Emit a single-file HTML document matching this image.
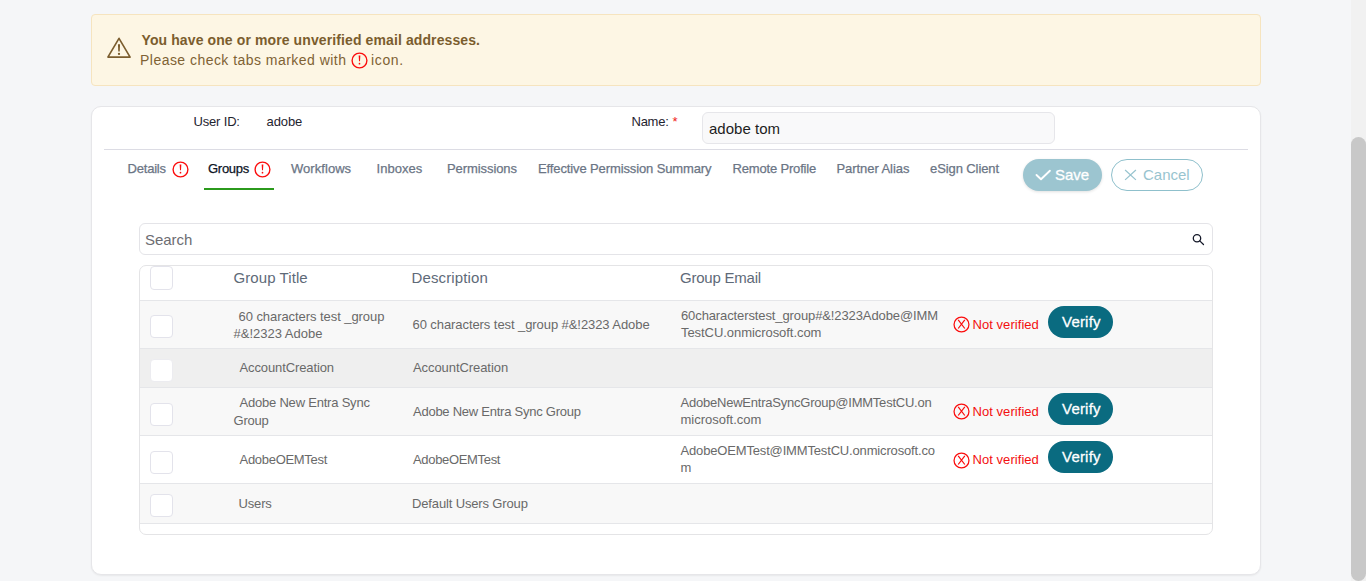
<!DOCTYPE html>
<html><head><meta charset="utf-8"><title>Groups</title><style>
html,body{margin:0;padding:0;}
body{width:1366px;height:581px;overflow:hidden;position:relative;background:#f5f6f8;font-family:"Liberation Sans",sans-serif;}
.t{position:absolute;white-space:pre;line-height:1;}
.ic{position:absolute;display:block;}
.banner{position:absolute;left:91px;top:14px;width:1168px;height:69.5px;background:#fdf6e4;border:1px solid #f6e4bf;border-radius:4px;}
.card{position:absolute;left:91px;top:106px;width:1167.6px;height:467px;background:#fff;border:1px solid #e6e6e9;border-radius:10px;box-shadow:0 1px 2px rgba(0,0,0,0.06);}
.sep{position:absolute;left:104px;top:149px;width:1144px;height:1.2px;background:#dcdce4;}
.inp{position:absolute;left:702px;top:112.3px;width:351px;height:29.4px;background:#f9f9fa;border:1px solid #e6e6ea;border-radius:6px;}
.uline{position:absolute;left:204px;top:187.6px;width:70px;height:2.6px;background:#2b9a1c;}
.save{position:absolute;left:1023px;top:159px;width:79px;height:31.7px;background:#9cc5d0;border-radius:16px;box-shadow:0 1px 3px rgba(0,0,0,0.12);}
.cancel{position:absolute;left:1111px;top:159px;width:90px;height:29.7px;border:1px solid #8fc0cc;border-radius:16px;background:#fff;}
.search{position:absolute;left:139px;top:223px;width:1072px;height:30px;border:1px solid #e4e4e8;border-radius:6px;background:#fff;}
.table{position:absolute;left:139px;top:265px;width:1072px;height:267.5px;border:1px solid #e4e4e6;border-radius:7px;background:#fff;overflow:hidden;}
.row{position:absolute;left:0;right:0;border-top:1px solid #e5e6e9;box-sizing:border-box;}
.cb{position:absolute;left:150px;width:22.5px;height:23px;box-sizing:border-box;border:1px solid #e3e3eb;border-radius:4px;background:#fff;}
.vb{position:absolute;left:1048px;width:65.3px;height:31.5px;background:#0a6b80;border-radius:16px;}
.sbtrack{position:absolute;left:1351px;top:0;width:15px;height:581px;background:#f1f1f1;border-left:0px solid #e8e8e8;}
.sbthumb{position:absolute;left:1351px;top:137px;width:15px;height:444px;background:#c8c8c8;border-radius:7.5px;}
</style></head>
<body>
<div class="banner"></div>
<svg class="ic" style="left:106px;top:36px" width="26" height="24" viewBox="0 0 26 24"><path d="M13 2.3 L24.1 21.1 L1.9 21.1 Z" fill="none" stroke="#7b5d2e" stroke-width="1.65" stroke-linejoin="round"/><path d="M11.95 8.2 L14.05 8.2 L13.75 15.5 L12.25 15.5 Z" fill="#7b5d2e"/><circle cx="13" cy="17.9" r="1.15" fill="#7b5d2e"/></svg>
<svg class="ic" style="left:350.6px;top:51.6px" width="17" height="17" viewBox="0 0 17 17"><circle cx="8.5" cy="8.5" r="7.4" fill="none" stroke="#fb0c0c" stroke-width="1.35"/><path d="M7.65 3.5 L9.35 3.5 L9.0 9.3 L8.0 9.3 Z" fill="#fb0c0c"/><circle cx="8.5" cy="11.7" r="0.85" fill="#fb0c0c"/></svg>
<div class="card"></div>
<div class="sep"></div>
<div class="inp"></div>
<span class="t" style="left:672.5px;top:114.80px;font-size:13px;color:#f01818">*</span>
<svg class="ic" style="left:171.6px;top:160.6px" width="17" height="17" viewBox="0 0 17 17"><circle cx="8.5" cy="8.5" r="7.4" fill="none" stroke="#fb0c0c" stroke-width="1.35"/><path d="M7.65 3.5 L9.35 3.5 L9.0 9.3 L8.0 9.3 Z" fill="#fb0c0c"/><circle cx="8.5" cy="11.7" r="0.85" fill="#fb0c0c"/></svg>
<svg class="ic" style="left:253.6px;top:160.6px" width="17" height="17" viewBox="0 0 17 17"><circle cx="8.5" cy="8.5" r="7.4" fill="none" stroke="#fb0c0c" stroke-width="1.35"/><path d="M7.65 3.5 L9.35 3.5 L9.0 9.3 L8.0 9.3 Z" fill="#fb0c0c"/><circle cx="8.5" cy="11.7" r="0.85" fill="#fb0c0c"/></svg>
<div class="uline"></div>
<div class="save"></div>
<svg class="ic" style="left:1035px;top:169px" width="17" height="13" viewBox="0 0 17 13"><path d="M1.5 6.0 L6.0 10.2 L14.9 1.7" fill="none" stroke="#fff" stroke-width="1.9" stroke-linecap="round" stroke-linejoin="round"/></svg>
<div class="cancel"></div>
<svg class="ic" style="left:1124px;top:169px" width="13" height="12" viewBox="0 0 13 12"><path d="M1.1 1.0 L11.9 10.9 M11.9 1.0 L1.1 10.9" fill="none" stroke="#98c4cf" stroke-width="1.25"/></svg>
<div class="search"></div>
<svg class="ic" style="left:1191px;top:232px" width="15" height="15" viewBox="0 0 15 15"><circle cx="6" cy="6.25" r="3.7" fill="none" stroke="#141828" stroke-width="1.3"/><path d="M8.7 8.9 L12.5 12.5" stroke="#141828" stroke-width="1.3" stroke-linecap="round"/></svg>
<div class="table">
  <div class="row" style="top:34px;height:48px;background:#f8f8f8"></div>
  <div class="row" style="top:82px;height:39px;background:#efefef"></div>
  <div class="row" style="top:121px;height:48px;background:#f8f8f8"></div>
  <div class="row" style="top:169px;height:48px;background:#ffffff"></div>
  <div class="row" style="top:217px;height:41px;background:#f8f8f8;border-bottom:1px solid #e5e6e9"></div>
</div>
<div class="cb" style="top:266px;height:23.6px"></div>
<div class="cb" style="top:315.3px"></div>
<div class="cb" style="top:359px;border-color:#ececf0"></div>
<div class="cb" style="top:403px"></div>
<div class="cb" style="top:450.7px"></div>
<div class="cb" style="top:494px"></div>
<svg class="ic" style="left:952.5px;top:316.4px" width="17" height="17" viewBox="0 0 17 17"><circle cx="8.5" cy="8.5" r="7.45" fill="none" stroke="#fb0c0c" stroke-width="1.25"/><path d="M5.2 3.9 L11.8 12.5 M11.8 3.9 L5.2 12.5" stroke="#fb0c0c" stroke-width="1.2" fill="none"/></svg>
<svg class="ic" style="left:952.5px;top:402.9px" width="17" height="17" viewBox="0 0 17 17"><circle cx="8.5" cy="8.5" r="7.45" fill="none" stroke="#fb0c0c" stroke-width="1.25"/><path d="M5.2 3.9 L11.8 12.5 M11.8 3.9 L5.2 12.5" stroke="#fb0c0c" stroke-width="1.2" fill="none"/></svg>
<svg class="ic" style="left:952.5px;top:451.79999999999995px" width="17" height="17" viewBox="0 0 17 17"><circle cx="8.5" cy="8.5" r="7.45" fill="none" stroke="#fb0c0c" stroke-width="1.25"/><path d="M5.2 3.9 L11.8 12.5 M11.8 3.9 L5.2 12.5" stroke="#fb0c0c" stroke-width="1.2" fill="none"/></svg>
<div class="vb" style="top:306.3px"></div>
<div class="vb" style="top:393.3px"></div>
<div class="vb" style="top:441px"></div>
<div class="sbtrack"></div>
<div class="sbthumb"></div>
<span id="b1" class="t" style="left:141.50px;top:33.15px;font-size:14px;font-weight:bold;color:#7b5d2e;letter-spacing:0.106px">You have one or more unverified email addresses.</span>
<span id="b2" class="t" style="left:140.00px;top:53.15px;font-size:14px;font-weight:normal;color:#7f6234;letter-spacing:0.464px">Please check tabs marked with</span>
<span id="b3" class="t" style="left:371.00px;top:53.15px;font-size:14px;font-weight:normal;color:#7f6234;letter-spacing:0.650px">icon.</span>
<span id="uid" class="t" style="left:193.50px;top:115.00px;font-size:13px;font-weight:normal;color:#1f2430;letter-spacing:-0.172px">User ID:</span>
<span id="uidv" class="t" style="left:266.50px;top:115.00px;font-size:13px;font-weight:normal;color:#1f2430;letter-spacing:-0.100px">adobe</span>
<span id="nm" class="t" style="left:631.50px;top:114.80px;font-size:13px;font-weight:normal;color:#1f2430;letter-spacing:-0.250px">Name:</span>
<span id="nmv" class="t" style="left:709.00px;top:121.00px;font-size:15px;font-weight:normal;color:#1d1d22;letter-spacing:0.025px">adobe tom</span>
<span id="t1" class="t" style="left:127.50px;top:162.00px;font-size:13px;font-weight:normal;color:#6b7585;letter-spacing:-0.200px;-webkit-text-stroke:0.25px #6b7585">Details</span>
<span id="t2" class="t" style="left:208.00px;top:162.00px;font-size:13px;font-weight:normal;color:#0c1424;letter-spacing:-0.280px;-webkit-text-stroke:0.25px #0c1424">Groups</span>
<span id="t3" class="t" style="left:291.00px;top:162.00px;font-size:13px;font-weight:normal;color:#6b7585;letter-spacing:0.050px;-webkit-text-stroke:0.25px #6b7585">Workflows</span>
<span id="t4" class="t" style="left:376.50px;top:162.00px;font-size:13px;font-weight:normal;color:#6b7585;letter-spacing:0.033px;-webkit-text-stroke:0.25px #6b7585">Inboxes</span>
<span id="t5" class="t" style="left:447.00px;top:162.00px;font-size:13px;font-weight:normal;color:#6b7585;letter-spacing:-0.080px;-webkit-text-stroke:0.25px #6b7585">Permissions</span>
<span id="t6" class="t" style="left:538.00px;top:162.00px;font-size:13px;font-weight:normal;color:#6b7585;letter-spacing:-0.118px;-webkit-text-stroke:0.25px #6b7585">Effective Permission Summary</span>
<span id="t7" class="t" style="left:732.50px;top:162.00px;font-size:13px;font-weight:normal;color:#6b7585;letter-spacing:-0.170px;-webkit-text-stroke:0.25px #6b7585">Remote Profile</span>
<span id="t8" class="t" style="left:836.50px;top:162.00px;font-size:13px;font-weight:normal;color:#6b7585;letter-spacing:-0.066px;-webkit-text-stroke:0.25px #6b7585">Partner Alias</span>
<span id="t9" class="t" style="left:930.00px;top:162.00px;font-size:13px;font-weight:normal;color:#6b7585;letter-spacing:-0.090px;-webkit-text-stroke:0.25px #6b7585">eSign Client</span>
<span id="sv" class="t" style="left:1055.00px;top:166.70px;font-size:15px;font-weight:normal;color:#ffffff;letter-spacing:-0.068px;-webkit-text-stroke:0.3px #ffffff">Save</span>
<span id="cn" class="t" style="left:1143.00px;top:166.90px;font-size:15px;font-weight:normal;color:#98c4cf;letter-spacing:0.000px">Cancel</span>
<span id="srch" class="t" style="left:145.00px;top:232.30px;font-size:15px;font-weight:normal;color:#6d6d72;letter-spacing:-0.040px">Search</span>
<span id="h1" class="t" style="left:233.50px;top:270.00px;font-size:15px;font-weight:normal;color:#5e6a78;letter-spacing:0.080px">Group Title</span>
<span id="h2" class="t" style="left:411.50px;top:270.00px;font-size:15px;font-weight:normal;color:#5e6a78;letter-spacing:0.120px">Description</span>
<span id="h3" class="t" style="left:680.00px;top:269.70px;font-size:15px;font-weight:normal;color:#5e6a78;letter-spacing:-0.220px">Group Email</span>
<span id="r1a" class="t" style="left:238.50px;top:309.50px;font-size:13px;font-weight:normal;color:#696969;letter-spacing:-0.064px">60 characters test _group</span>
<span id="r1b" class="t" style="left:233.50px;top:326.90px;font-size:13px;font-weight:normal;color:#696969;letter-spacing:0.000px">#&amp;!2323 Adobe</span>
<span id="r1d" class="t" style="left:412.50px;top:318.10px;font-size:13px;font-weight:normal;color:#696969;letter-spacing:-0.074px">60 characters test _group #&amp;!2323 Adobe</span>
<span id="r1e1" class="t" style="left:681.00px;top:309.10px;font-size:13px;font-weight:normal;color:#696969;letter-spacing:-0.109px">60characterstest_group#&amp;!2323Adobe@IMM</span>
<span id="r1e2" class="t" style="left:681.00px;top:326.30px;font-size:13px;font-weight:normal;color:#696969;letter-spacing:-0.057px">TestCU.onmicrosoft.com</span>
<span id="r1n" class="t" style="left:972.50px;top:317.80px;font-size:13px;font-weight:normal;color:#f30f0f;letter-spacing:0.053px">Not verified</span>
<span id="r1v" class="t" style="left:1062.00px;top:314.00px;font-size:15px;font-weight:normal;color:#ffffff;letter-spacing:0.200px;-webkit-text-stroke:0.3px #ffffff">Verify</span>
<span id="r2a" class="t" style="left:239.50px;top:361.30px;font-size:13px;font-weight:normal;color:#696969;letter-spacing:-0.115px">AccountCreation</span>
<span id="r2d" class="t" style="left:413.00px;top:361.30px;font-size:13px;font-weight:normal;color:#696969;letter-spacing:-0.071px">AccountCreation</span>
<span id="r3a" class="t" style="left:239.50px;top:395.80px;font-size:13px;font-weight:normal;color:#696969;letter-spacing:-0.210px">Adobe New Entra Sync</span>
<span id="r3b" class="t" style="left:233.50px;top:413.80px;font-size:13px;font-weight:normal;color:#696969;letter-spacing:-0.200px">Group</span>
<span id="r3d" class="t" style="left:413.00px;top:404.90px;font-size:13px;font-weight:normal;color:#696969;letter-spacing:-0.248px">Adobe New Entra Sync Group</span>
<span id="r3e1" class="t" style="left:680.50px;top:395.50px;font-size:13px;font-weight:normal;color:#696969;letter-spacing:-0.224px">AdobeNewEntraSyncGroup@IMMTestCU.on</span>
<span id="r3e2" class="t" style="left:680.50px;top:413.40px;font-size:13px;font-weight:normal;color:#696969;letter-spacing:0.000px">microsoft.com</span>
<span id="r3n" class="t" style="left:972.50px;top:404.50px;font-size:13px;font-weight:normal;color:#f30f0f;letter-spacing:0.053px">Not verified</span>
<span id="r3v" class="t" style="left:1062.00px;top:400.80px;font-size:15px;font-weight:normal;color:#ffffff;letter-spacing:0.200px;-webkit-text-stroke:0.3px #ffffff">Verify</span>
<span id="r4a" class="t" style="left:239.50px;top:453.20px;font-size:13px;font-weight:normal;color:#696969;letter-spacing:-0.292px">AdobeOEMTest</span>
<span id="r4d" class="t" style="left:413.00px;top:453.20px;font-size:13px;font-weight:normal;color:#696969;letter-spacing:-0.326px">AdobeOEMTest</span>
<span id="r4e1" class="t" style="left:680.50px;top:443.70px;font-size:13px;font-weight:normal;color:#696969;letter-spacing:-0.161px">AdobeOEMTest@IMMTestCU.onmicrosoft.co</span>
<span id="r4e2" class="t" style="left:680.50px;top:461.10px;font-size:13px;font-weight:normal;color:#696969;letter-spacing:0.000px">m</span>
<span id="r4n" class="t" style="left:972.50px;top:453.20px;font-size:13px;font-weight:normal;color:#f30f0f;letter-spacing:0.053px">Not verified</span>
<span id="r4v" class="t" style="left:1062.00px;top:448.50px;font-size:15px;font-weight:normal;color:#ffffff;letter-spacing:0.200px;-webkit-text-stroke:0.3px #ffffff">Verify</span>
<span id="r5a" class="t" style="left:238.50px;top:497.20px;font-size:13px;font-weight:normal;color:#696969;letter-spacing:-0.150px">Users</span>
<span id="r5d" class="t" style="left:412.00px;top:497.20px;font-size:13px;font-weight:normal;color:#696969;letter-spacing:-0.144px">Default Users Group</span>
</body></html>
